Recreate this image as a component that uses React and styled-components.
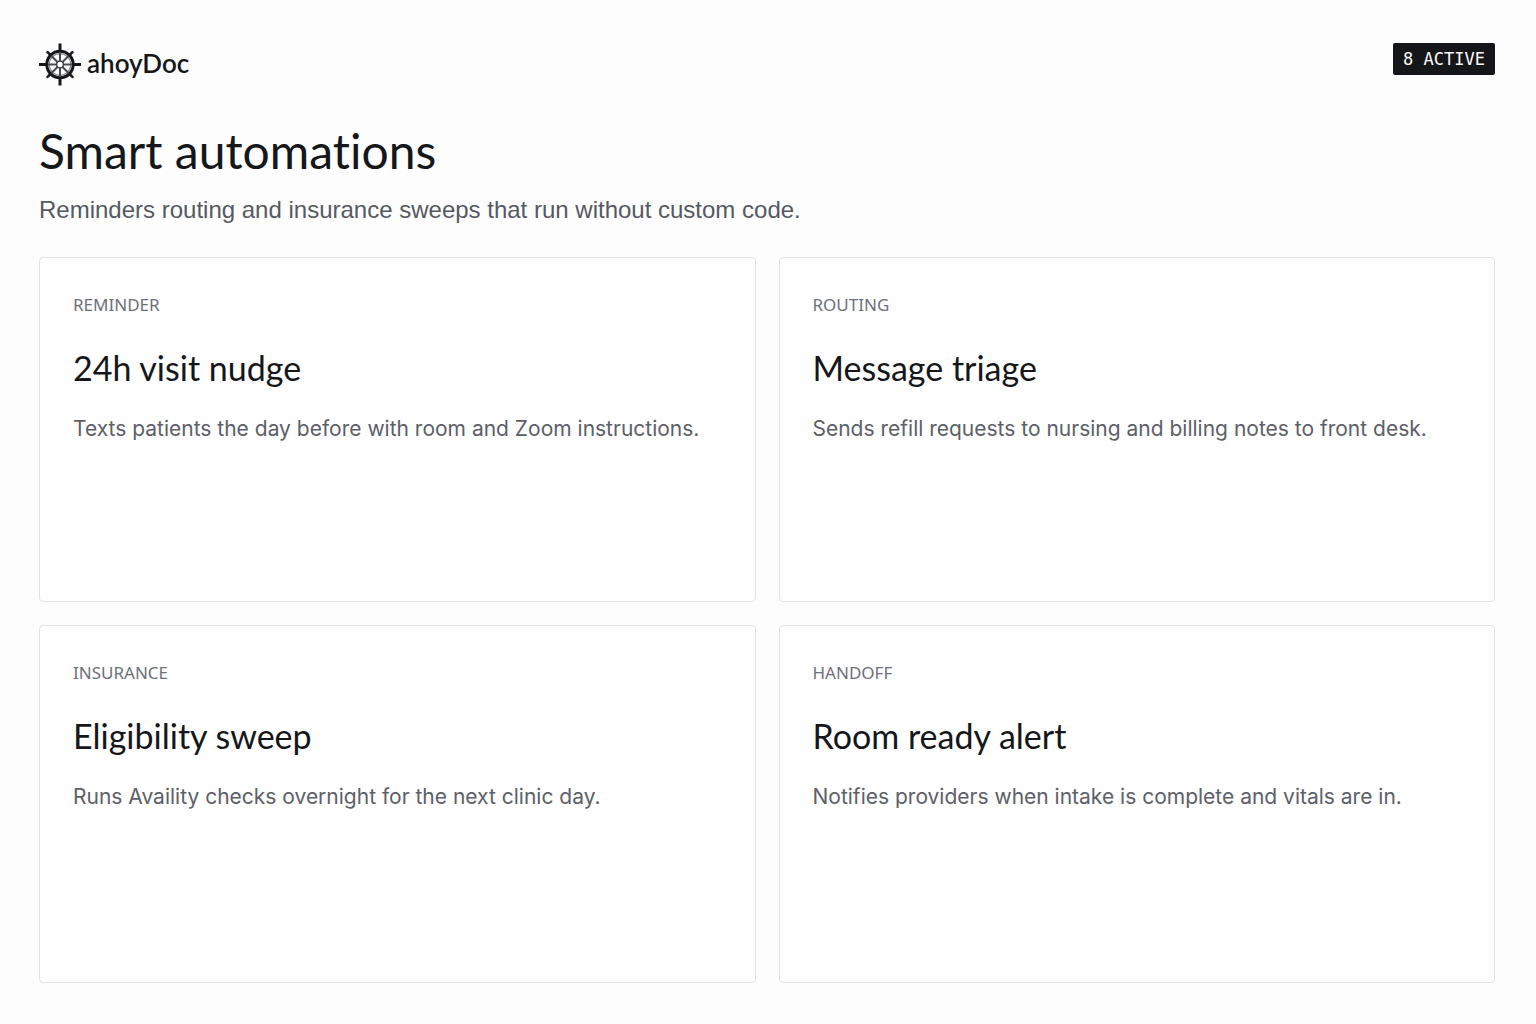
import React from "react"
import styled, { createGlobalStyle } from "styled-components"

const GlobalStyle = createGlobalStyle`
  * {
    box-sizing: border-box;
  }

  body {
    margin: 0;
    background: #fdfdfd;
    color: #15171b;
    font-family: "Liberation Sans", Arial, sans-serif;
  }

  h1,
  h2,
  p {
    margin: 0;
  }

  h1,
  h2 {
    font-family: Lato, sans-serif;
    font-weight: 400;
    font-variant-ligatures: none;
  }
`

const Page = styled.main`
  min-height: 100vh;
  padding: 43px 41px 41px 39px;
  display: flex;
  flex-direction: column;
`

const Header = styled.header`
  display: flex;
  justify-content: space-between;
  align-items: flex-start;
`

const Brand = styled.a`
  display: flex;
  align-items: center;
  gap: 6px;
  color: #15171b;
  text-decoration: none;
`

const BrandName = styled.span`
  font-family: Lato, sans-serif;
  font-size: 26px;
  font-weight: 600;
  line-height: 32px;
  padding-bottom: 4px;
`

const Badge = styled.span`
  padding: 1px 10px 0;
  border-radius: 2px;
  background: #15161a;
  color: #fafafa;
  font-family: "DejaVu Sans Mono", monospace;
  font-size: 17px;
  line-height: 31px;
`

const Title = styled.h1`
  margin-top: 36px;
  font-size: 48px;
  line-height: 58px;
`

const Lead = styled.p`
  margin-top: 16px;
  color: #555962;
  font-size: 24px;
  line-height: 28px;
`

const Grid = styled.section`
  flex: 1;
  margin-top: 33px;
  display: grid;
  grid-template-columns: 1fr 1fr;
  grid-template-rows: 27fr 28fr;
  gap: 23px;
`

const Card = styled.article`
  padding: 34px 33px;
  border: 1px solid #e1e2e4;
  border-radius: 4px;
  background: #fefefe;
`

const Kind = styled.p`
  color: #6d7078;
  font-family: "Noto Sans", sans-serif;
  font-size: 17px;
  line-height: 26px;
  text-transform: uppercase;
`

const CardTitle = styled.h2`
  margin-top: 28px;
  font-size: 34px;
  line-height: 44px;
`

const CardText = styled.p`
  margin-top: 24px;
  color: #5c6068;
  font-family: Inter, sans-serif;
  font-size: 21px;
  line-height: 30px;
`

const automations = [
  {
    kind: "Reminder",
    title: "24h visit nudge",
    text: "Texts patients the day before with room and Zoom instructions.",
  },
  {
    kind: "Routing",
    title: "Message triage",
    text: "Sends refill requests to nursing and billing notes to front desk.",
  },
  {
    kind: "Insurance",
    title: "Eligibility sweep",
    text: "Runs Availity checks overnight for the next clinic day.",
  },
  {
    kind: "Handoff",
    title: "Room ready alert",
    text: "Notifies providers when intake is complete and vitals are in.",
  },
]

const ShipWheel = () => (
  <svg width="42" height="43" viewBox="-21 -21.5 42 43" fill="none" aria-hidden="true">
    <g stroke="#15171b">
      <circle r="13.2" strokeWidth="3" />
      <circle r="10.8" stroke="#8b8d91" strokeWidth="1.2" />
      {[0, 45, 90, 135, 180, 225, 270, 315].map(angle => (
        <g key={angle} transform={`rotate(${angle})`}>
          <path d="M0 -3.6V-12" stroke="#4a4c51" strokeWidth="2" />
          {angle % 90 === 0 ? (
            <path d="M0 -14V-21" strokeWidth="3" />
          ) : (
            <path d="M0 -14V-17.6" strokeWidth="2.6" strokeLinecap="round" />
          )}
        </g>
      ))}
      <circle r="3.4" fill="#fdfdfd" stroke="#3a3c41" strokeWidth="1.4" />
    </g>
  </svg>
)

export default function App() {
  return (
    <>
      <GlobalStyle />
      <Page>
        <Header>
          <Brand href="#">
            <ShipWheel />
            <BrandName>ahoyDoc</BrandName>
          </Brand>
          <Badge>8 ACTIVE</Badge>
        </Header>
        <Title>Smart automations</Title>
        <Lead>Reminders routing and insurance sweeps that run without custom code.</Lead>
        <Grid>
          {automations.map(item => (
            <Card key={item.kind}>
              <Kind>{item.kind}</Kind>
              <CardTitle>{item.title}</CardTitle>
              <CardText>{item.text}</CardText>
            </Card>
          ))}
        </Grid>
      </Page>
    </>
  )
}
